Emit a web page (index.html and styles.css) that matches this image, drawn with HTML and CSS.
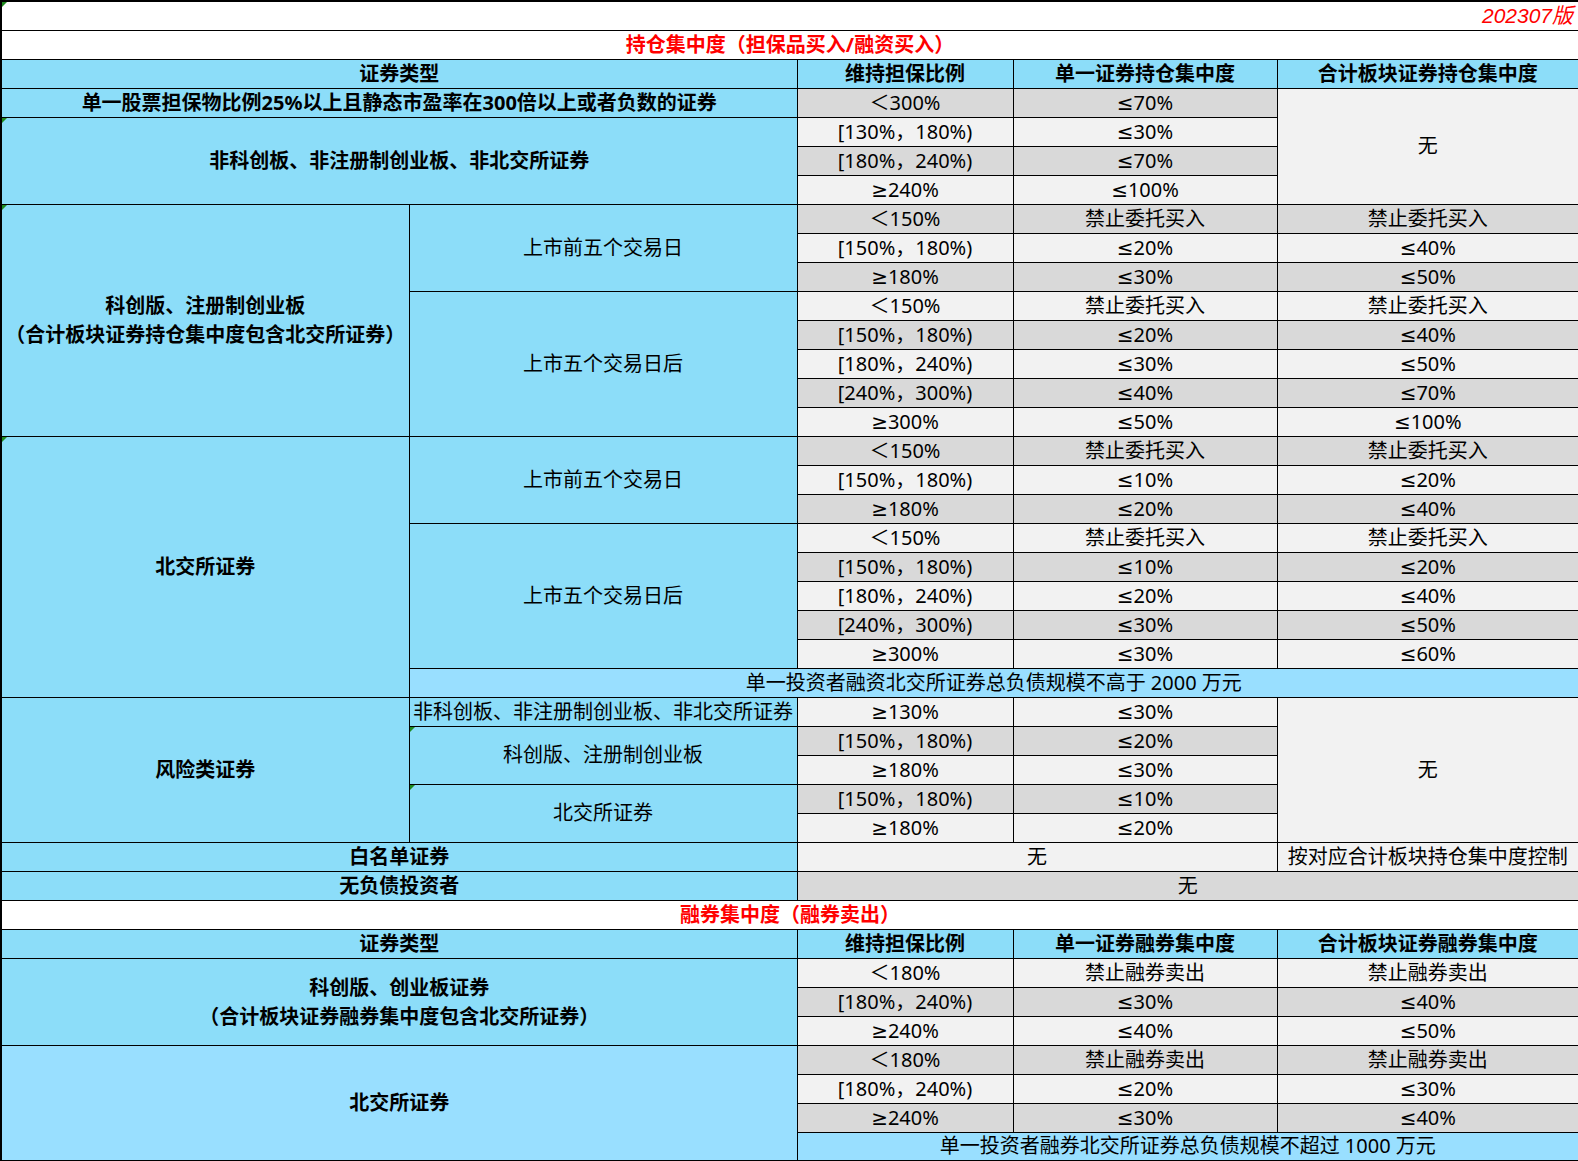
FILE: index.html
```html
<!DOCTYPE html>
<html lang="zh-CN">
<head>
<meta charset="utf-8">
<title>集中度</title>
<link rel="stylesheet" href="styles.css">
</head>
<body>
<table class="sheet">
  <colgroup>
    <col class="c1"><col class="c2"><col class="c3"><col class="c4"><col class="c5">
  </colgroup>
  <tbody>
    <tr><td colspan="5" class="ver tri">202307版</td></tr>
    <tr><td colspan="5" class="title">持仓集中度（担保品买入/融资买入）</td></tr>
    <tr><td colspan="2" class="hd">证券类型</td><td class="hd">维持担保比例</td><td class="hd">单一证券持仓集中度</td><td class="hd">合计板块证券持仓集中度</td></tr>
    <tr><td colspan="2" class="cat">单一股票担保物比例25%以上且静态市盈率在300倍以上或者负数的证券</td><td class="dk">＜300%</td><td class="dk">≤70%</td><td rowspan="4" class="lt">无</td></tr>
    <tr><td colspan="2" rowspan="3" class="cat tri">非科创板、非注册制创业板、非北交所证券</td><td class="lt">[130%，180%)</td><td class="lt">≤30%</td></tr>
    <tr><td class="dk">[180%，240%)</td><td class="dk">≤70%</td></tr>
    <tr><td class="lt">≥240%</td><td class="lt">≤100%</td></tr>

    <tr><td rowspan="8" class="cat tri two">科创版、注册制创业板<br>（合计板块证券持仓集中度包含北交所证券）</td><td rowspan="3" class="sub">上市前五个交易日</td><td class="dk">＜150%</td><td class="dk">禁止委托买入</td><td class="dk">禁止委托买入</td></tr>
    <tr><td class="lt">[150%，180%)</td><td class="lt">≤20%</td><td class="lt">≤40%</td></tr>
    <tr><td class="dk">≥180%</td><td class="dk">≤30%</td><td class="dk">≤50%</td></tr>
    <tr><td rowspan="5" class="sub">上市五个交易日后</td><td class="lt">＜150%</td><td class="lt">禁止委托买入</td><td class="lt">禁止委托买入</td></tr>
    <tr><td class="dk">[150%，180%)</td><td class="dk">≤20%</td><td class="dk">≤40%</td></tr>
    <tr><td class="lt">[180%，240%)</td><td class="lt">≤30%</td><td class="lt">≤50%</td></tr>
    <tr><td class="dk">[240%，300%)</td><td class="dk">≤40%</td><td class="dk">≤70%</td></tr>
    <tr><td class="lt">≥300%</td><td class="lt">≤50%</td><td class="lt">≤100%</td></tr>

    <tr><td rowspan="9" class="cat tri">北交所证券</td><td rowspan="3" class="sub">上市前五个交易日</td><td class="dk">＜150%</td><td class="dk">禁止委托买入</td><td class="dk">禁止委托买入</td></tr>
    <tr><td class="lt">[150%，180%)</td><td class="lt">≤10%</td><td class="lt">≤20%</td></tr>
    <tr><td class="dk">≥180%</td><td class="dk">≤20%</td><td class="dk">≤40%</td></tr>
    <tr><td rowspan="5" class="sub">上市五个交易日后</td><td class="lt">＜150%</td><td class="lt">禁止委托买入</td><td class="lt">禁止委托买入</td></tr>
    <tr><td class="dk">[150%，180%)</td><td class="dk">≤10%</td><td class="dk">≤20%</td></tr>
    <tr><td class="lt">[180%，240%)</td><td class="lt">≤20%</td><td class="lt">≤40%</td></tr>
    <tr><td class="dk">[240%，300%)</td><td class="dk">≤30%</td><td class="dk">≤50%</td></tr>
    <tr><td class="lt">≥300%</td><td class="lt">≤30%</td><td class="lt">≤60%</td></tr>
    <tr><td colspan="4" class="note">单一投资者融资北交所证券总负债规模不高于 2000 万元</td></tr>

    <tr><td rowspan="5" class="cat">风险类证券</td><td class="sub">非科创板、非注册制创业板、非北交所证券</td><td class="lt">≥130%</td><td class="lt">≤30%</td><td rowspan="5" class="lt">无</td></tr>
    <tr><td rowspan="2" class="sub tri">科创版、注册制创业板</td><td class="dk">[150%，180%)</td><td class="dk">≤20%</td></tr>
    <tr><td class="lt">≥180%</td><td class="lt">≤30%</td></tr>
    <tr><td rowspan="2" class="sub tri">北交所证券</td><td class="dk">[150%，180%)</td><td class="dk">≤10%</td></tr>
    <tr><td class="lt">≥180%</td><td class="lt">≤20%</td></tr>

    <tr><td colspan="2" class="cat">白名单证券</td><td colspan="2" class="lt">无</td><td class="lt">按对应合计板块持仓集中度控制</td></tr>
    <tr><td colspan="2" class="cat">无负债投资者</td><td colspan="3" class="dk">无</td></tr>

    <tr><td colspan="5" class="title">融券集中度（融券卖出）</td></tr>
    <tr><td colspan="2" class="hd">证券类型</td><td class="hd">维持担保比例</td><td class="hd">单一证券融券集中度</td><td class="hd">合计板块证券融券集中度</td></tr>
    <tr><td colspan="2" rowspan="3" class="cat two">科创版、创业板证券<br>（合计板块证券融券集中度包含北交所证券）</td><td class="lt">＜180%</td><td class="lt">禁止融券卖出</td><td class="lt">禁止融券卖出</td></tr>
    <tr><td class="dk">[180%，240%)</td><td class="dk">≤30%</td><td class="dk">≤40%</td></tr>
    <tr><td class="lt">≥240%</td><td class="lt">≤40%</td><td class="lt">≤50%</td></tr>
    <tr><td colspan="2" rowspan="4" class="cat light">北交所证券</td><td class="dk">＜180%</td><td class="dk">禁止融券卖出</td><td class="dk">禁止融券卖出</td></tr>
    <tr><td class="lt">[180%，240%)</td><td class="lt">≤20%</td><td class="lt">≤30%</td></tr>
    <tr><td class="dk">≥240%</td><td class="dk">≤30%</td><td class="dk">≤40%</td></tr>
    <tr><td colspan="3" class="note">单一投资者融券北交所证券总负债规模不超过 1000 万元</td></tr>
  </tbody>
</table>
</body>
</html>
```

FILE: styles.css
```css
html, body {
  margin: 0;
  padding: 0;
  background: #ffffff;
}

.sheet {
  width: 1578px;
  table-layout: fixed;
  border-collapse: collapse;
  border: 2px solid #000;
  font-family: "Noto Sans", "DejaVu Sans", "Noto Sans CJK SC", sans-serif;
  font-size: 20px;
  color: #000;
}

.c1 { width: 408px; }
.c2 { width: 388px; }
.c3 { width: 216px; }
.c4 { width: 264px; }
.c5 { width: 302px; }

.sheet tr {
  height: 29px;
}

.sheet td {
  border: 1px solid #000;
  padding: 0;
  line-height: 26px;
  text-align: center;
  vertical-align: middle;
  white-space: nowrap;
  overflow: hidden;
}

.sheet td.two {
  line-height: 29px;
}

.ver {
  background: #fff;
  text-align: right !important;
  padding-right: 5px !important;
  color: #ff0000;
  font-size: 21px;
  font-style: italic;
  font-family: "Liberation Sans", "Noto Sans CJK SC", sans-serif;
}

.title {
  background: #fff;
  color: #ff0000;
  font-weight: 700;
}

.hd {
  background: #8cddf9;
  font-weight: 700;
}

.cat {
  background: #8cddf9;
  font-weight: 700;
}

.cat.light {
  background: #99dfff;
}

.sub {
  background: #8cddf9;
}

.note {
  background: #99dfff;
}

.dk {
  background: #d9d9d9;
}

.lt {
  background: #f2f2f2;
}

.tri {
  position: relative;
}

.tri::before {
  content: "";
  position: absolute;
  left: 0;
  top: 0;
  width: 0;
  height: 0;
  border-top: 5px solid #1f8b1f;
  border-right: 5px solid transparent;
}
```
